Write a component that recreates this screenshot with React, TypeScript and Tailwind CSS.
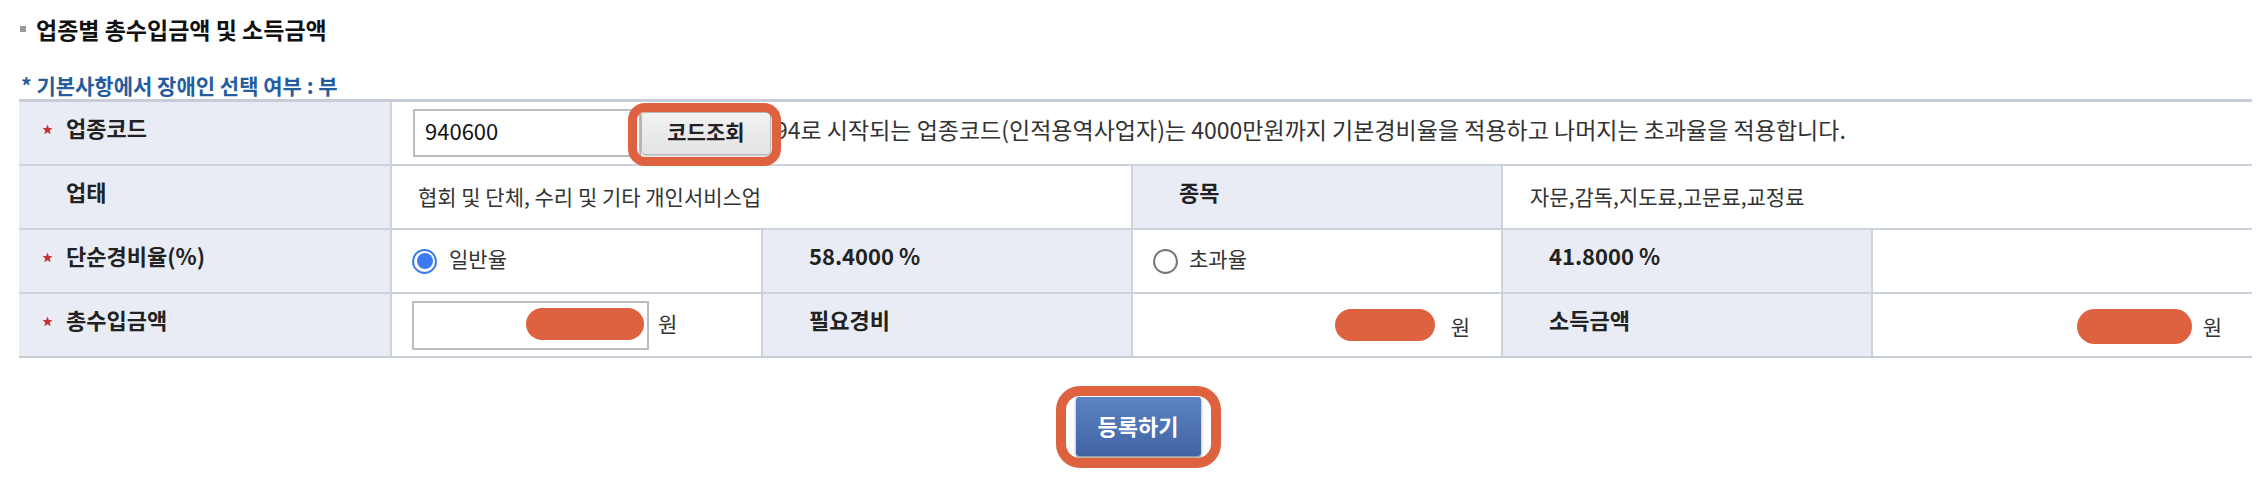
import React from "react";

const FONT = { fontFamily: '"Noto Sans CJK KR", "Noto Sans", sans-serif' };

function Star() {
  return (
    <svg width="11" height="11" viewBox="0 0 10 10" className="shrink-0 -mt-[8px]">
      <path
        d="M5 0.4 L6.2 3.6 L9.6 3.8 L7 5.9 L7.9 9.4 L5 7.5 L2.1 9.4 L3 5.9 L0.4 3.8 L3.8 3.6 Z"
        fill="#c2352a"
      />
    </svg>
  );
}

function Blob({ w, h = 32 }: { w: number; h?: number }) {
  return (
    <span
      className="inline-block rounded-full bg-[#de6240]"
      style={{ width: w, height: h }}
    />
  );
}

function Radio({ checked }: { checked: boolean }) {
  return checked ? (
    <span className="flex h-[25px] w-[25px] items-center justify-center rounded-full border-[2px] border-[#3a7bf0] bg-white">
      <span className="h-[16px] w-[16px] rounded-full bg-[#3a7bf0]" />
    </span>
  ) : (
    <span className="h-[25px] w-[25px] rounded-full border-[2px] border-[#767676] bg-white" />
  );
}

function LabelCell({
  star,
  children,
}: {
  star?: boolean;
  children: React.ReactNode;
}) {
  return (
    <div
      className={`flex h-[62px] items-center bg-[#e9ecf4] text-[22px] font-bold text-[#222] ${
        star ? "pl-[23px] gap-[13px]" : "pl-[47px]"
      }`}
    >
      {star && <Star />}
      <span className="pb-[12px]">{children}</span>
    </div>
  );
}

function SubLabel({ children }: { children: React.ReactNode }) {
  return (
    <div className="flex h-[62px] items-center bg-[#e9ecf4] pl-[46px] text-[22px] font-bold text-[#222]">
      <span className="pb-[12px]">{children}</span>
    </div>
  );
}

export default function App() {
  return (
    <div className="w-[2268px] h-[488px] bg-white pt-[14px]" style={FONT}>
      <div className="flex h-[30px] items-center pl-[20px]">
        <span className="mr-[10px] h-[6px] w-[6px] bg-[#9a9a9a]" />
        <span className="text-[23px] font-bold leading-[30px] text-[#111]">
          업종별 총수입금액 및 소득금액
        </span>
      </div>
      <div className="mt-[28px] h-[27px] pl-[21px] text-[21px] font-bold leading-[27px] text-[#245d9f]">
        * 기본사항에서 장애인 선택 여부 : 부
      </div>

      <div className="ml-[19px] grid w-[2233px] grid-cols-[371px_369px_368px_368px_368px_379px] gap-[2px] border-t-[3px] border-b-[2px] border-[#c6cdd7] bg-[#cdd3dc]">
        {/* Row 1 */}
        <LabelCell star>업종코드</LabelCell>
        <div className="col-span-5 flex h-[62px] items-center bg-white pl-[21px]">
          <div className="flex h-[48px] w-[228px] items-center border-[2px] border-[#bdbdbd] bg-white pl-[10px] pb-[5px] text-[22px] text-[#111]">
            940600
          </div>
          <div className="relative">
            <button className="flex h-[43px] w-[130px] items-center justify-center rounded-[4px] border border-[#b8b8b8] bg-gradient-to-b from-[#f2f2f2] to-[#e3e3e3] pb-[3px] text-[21px] font-bold text-[#222] shadow-[0_1px_2px_rgba(0,0,0,0.25)]">
              코드조회
            </button>
            <span className="pointer-events-none absolute -bottom-[11px] -left-[13px] -right-[10px] -top-[9px] rounded-[17px] border-[9px] border-[#de6240]" />
          </div>
          <span className="ml-[4px] pb-[8px] text-[23px] text-[#333]">
            94로 시작되는 업종코드(인적용역사업자)는 4000만원까지 기본경비율을 적용하고 나머지는 초과율을 적용합니다.
          </span>
        </div>

        {/* Row 2 */}
        <LabelCell>업태</LabelCell>
        <div className="col-span-2 flex h-[62px] items-center bg-white pl-[26px] text-[21px] text-[#333]">
          협회 및 단체, 수리 및 기타 개인서비스업
        </div>
        <SubLabel>종목</SubLabel>
        <div className="col-span-2 flex h-[62px] items-center bg-white pl-[27px] text-[21px] text-[#333]">
          자문,감독,지도료,고문료,교정료
        </div>

        {/* Row 3 */}
        <LabelCell star>단순경비율(%)</LabelCell>
        <div className="flex h-[62px] items-center gap-[12px] bg-white pl-[20px] text-[21px] text-[#333]">
          <Radio checked />
          <span className="pb-[4px]">일반율</span>
        </div>
        <SubLabel>58.4000 %</SubLabel>
        <div className="flex h-[62px] items-center gap-[11px] bg-white pl-[20px] text-[21px] text-[#333]">
          <Radio checked={false} />
          <span className="pb-[4px]">초과율</span>
        </div>
        <SubLabel>41.8000 %</SubLabel>
        <div className="h-[62px] bg-white" />

        {/* Row 4 */}
        <LabelCell star>총수입금액</LabelCell>
        <div className="flex h-[62px] items-center bg-white pl-[20px] text-[21px] text-[#333]">
          <div className="flex h-[49px] w-[237px] items-center justify-end border-[2px] border-[#bdbdbd] bg-white pr-[3px] pb-[2px]">
            <Blob w={118} />
          </div>
          <span className="ml-[9px] pb-[2px]">원</span>
        </div>
        <SubLabel>필요경비</SubLabel>
        <div className="flex h-[62px] items-center justify-end gap-[16px] bg-white pr-[31px] text-[21px] text-[#333]">
          <span className="pt-[8px]">
            <Blob w={100} h={32} />
          </span>
          <span className="pt-[4px]">원</span>
        </div>
        <SubLabel>소득금액</SubLabel>
        <div className="flex h-[62px] items-center justify-end gap-[11px] bg-white pr-[30px] text-[21px] text-[#333]">
          <span className="pt-[10px]">
            <Blob w={115} h={35} />
          </span>
          <span className="pt-[4px]">원</span>
        </div>
      </div>

      <div className="mt-[39px] flex justify-center pl-[8px]">
        <div className="relative">
          <button className="flex h-[59px] w-[125px] items-center justify-center rounded-[3px] bg-gradient-to-b from-[#5d82c2] to-[#4164a4] pb-[3px] text-[22px] font-bold text-white shadow-[0_2px_3px_rgba(0,0,0,0.45)]">
            등록하기
          </button>
          <span className="pointer-events-none absolute -bottom-[12px] -left-[20px] -right-[20px] -top-[11px] rounded-[24px] border-[10px] border-[#de6240]" />
        </div>
      </div>
    </div>
  );
}
